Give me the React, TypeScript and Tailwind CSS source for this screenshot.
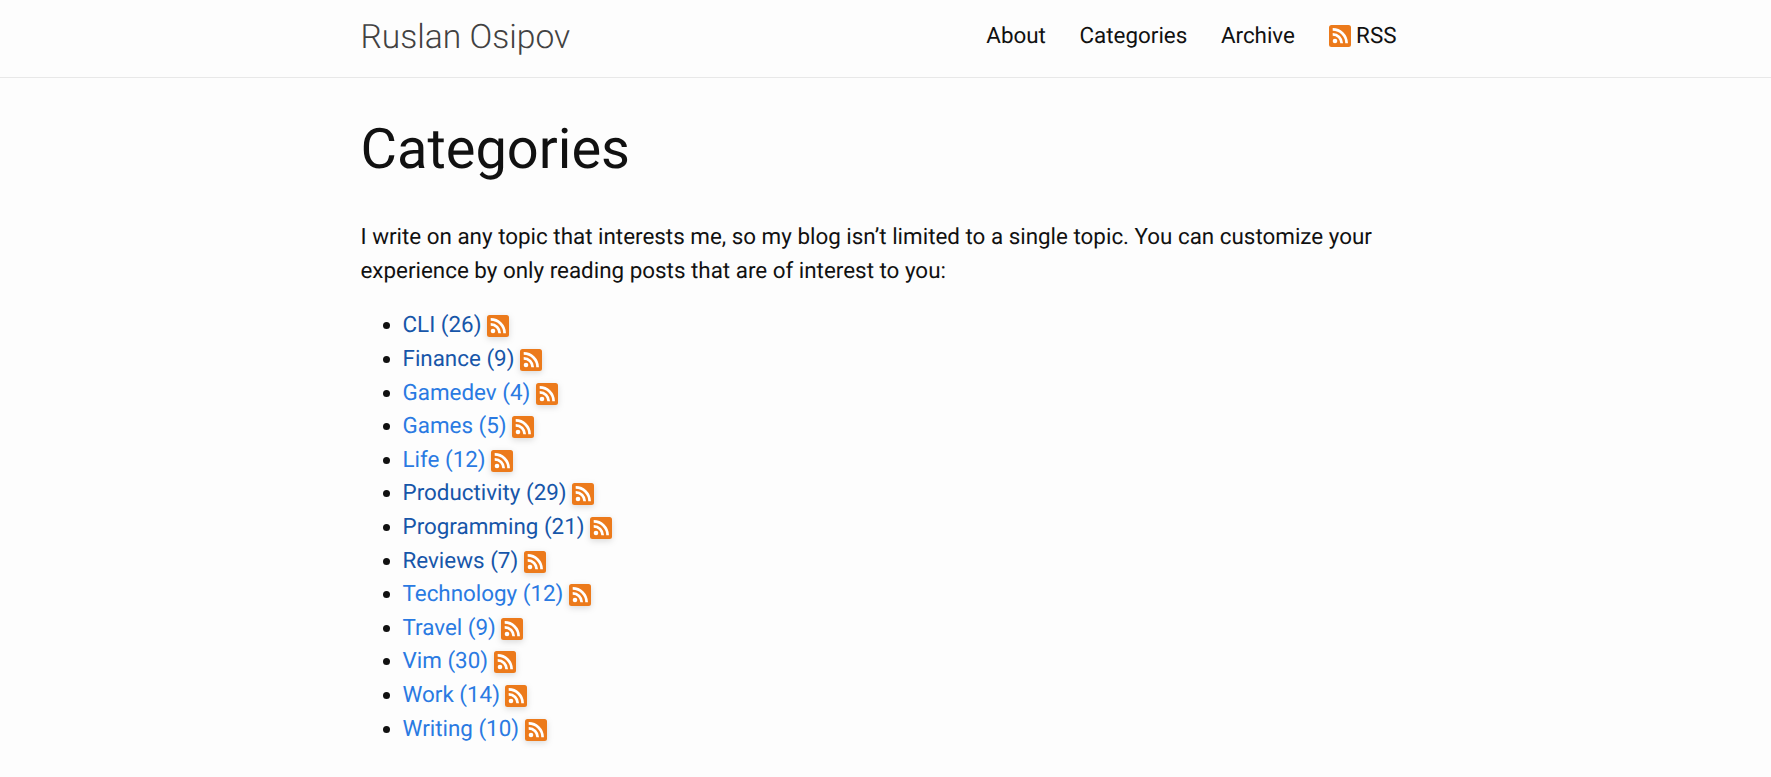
const categories = [
  { name: "CLI", count: 26, visited: true },
  { name: "Finance", count: 9, visited: true },
  { name: "Gamedev", count: 4, visited: false },
  { name: "Games", count: 5, visited: false },
  { name: "Life", count: 12, visited: false },
  { name: "Productivity", count: 29, visited: true },
  { name: "Programming", count: 21, visited: true },
  { name: "Reviews", count: 7, visited: true },
  { name: "Technology", count: 12, visited: false },
  { name: "Travel", count: 9, visited: false },
  { name: "Vim", count: 30, visited: false },
  { name: "Work", count: 14, visited: false },
  { name: "Writing", count: 10, visited: false },
];

function RssIcon({ shadow = false }: { shadow?: boolean }) {
  return (
    <svg
      viewBox="0 0 22 22"
      className={`inline-block h-[22px] w-[22px] ${shadow ? "align-[-5px] drop-shadow-[0_2px_3px_rgba(0,0,0,0.14)]" : "align-[-4px]"}`}
    >
      <rect width="22" height="22" rx="2.5" fill="#ec7a1b" />
      <circle cx="6" cy="16" r="2.3" fill="#fff" />
      <path d="M3.7 9.3a9 9 0 0 1 9 9" fill="none" stroke="#fff" strokeWidth="2.7" />
      <path d="M3.7 4.4a13.9 13.9 0 0 1 13.9 13.9" fill="none" stroke="#fff" strokeWidth="2.7" />
    </svg>
  );
}

export default function App() {
  return (
    <div className="min-h-screen bg-[#fdfdfd] font-['Roboto',sans-serif] text-[22.4px] leading-[33.6px] text-[#111] [text-rendering:geometricPrecision]">
      <header className="h-[78px] border-b border-[#e8e8e8]">
        <div className="mx-auto flex w-[1050px] items-start justify-between pr-[14px]">
          <a className="mt-[17px] text-[33.6px] leading-[42px] font-light text-[#424242]">Ruslan Osipov</a>
          <nav className="mt-[20px] flex gap-[33.6px]">
            <a>About</a>
            <a>Categories</a>
            <a>Archive</a>
            <a>
              <RssIcon /> RSS
            </a>
          </nav>
        </div>
      </header>
      <main className="mx-auto w-[1050px] pr-[13px]">
        <h1 className="mt-[38px] text-[56px] leading-[67px] font-normal">Categories</h1>
        <p className="mt-[38px]">
          I write on any topic that interests me, so my blog isn’t limited to a single topic. You can customize your experience by only reading posts that are of interest to you:
        </p>
        <ul className="mt-[21.2px] list-disc pl-[42px]">
          {categories.map((c) => (
            <li key={c.name}>
              <a className={c.visited ? "text-[#1756a9]" : "text-[#2a7ae2]"}>
                {c.name} ({c.count})
              </a>{" "}
              <RssIcon shadow />
            </li>
          ))}
        </ul>
      </main>
    </div>
  );
}
